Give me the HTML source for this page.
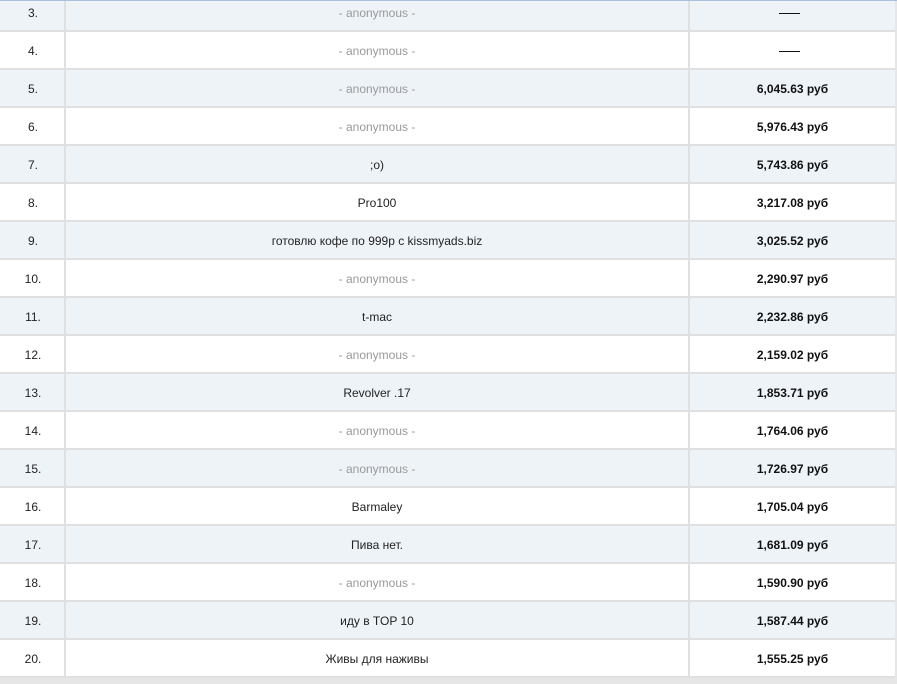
<!DOCTYPE html>
<html><head><meta charset="utf-8"><style>
body{margin:0;width:897px;height:684px;background:#e6e6e6;position:relative;overflow:hidden;font-family:"Liberation Sans",Arial,sans-serif;font-size:12px;color:#222}
.r{position:absolute;left:0;width:895px;height:36px;border-bottom:2px solid #e0e0e0}
.r.a{background:#eef3f8}.r.b{background:#fff}
.c{position:absolute;top:0;height:36px;line-height:38px;text-align:center}
.c1{left:0;width:64px;border-right:2px solid #e0e0e0;padding-left:2px;box-sizing:border-box;width:66px}
.c2{left:66px;width:622px;border-right:2px solid #e0e0e0}
.c3{left:690px;width:205px;font-weight:bold;color:#111}
.an{color:#999}
.d{display:inline-block;width:21px;height:1px;background:#111;vertical-align:middle;margin-left:-6px}
.top{position:absolute;left:0;top:0;width:897px;height:1px;background:#a9c0da}
</style></head><body>
<div class="r a" style="top:-6px"><div class="c c1">3.</div><div class="c c2 an">- anonymous -</div><div class="c c3"><span class="d"></span></div></div>
<div class="r b" style="top:32px"><div class="c c1">4.</div><div class="c c2 an">- anonymous -</div><div class="c c3"><span class="d"></span></div></div>
<div class="r a" style="top:70px"><div class="c c1">5.</div><div class="c c2 an">- anonymous -</div><div class="c c3">6,045.63 руб</div></div>
<div class="r b" style="top:108px"><div class="c c1">6.</div><div class="c c2 an">- anonymous -</div><div class="c c3">5,976.43 руб</div></div>
<div class="r a" style="top:146px"><div class="c c1">7.</div><div class="c c2">;o)</div><div class="c c3">5,743.86 руб</div></div>
<div class="r b" style="top:184px"><div class="c c1">8.</div><div class="c c2">Pro100</div><div class="c c3">3,217.08 руб</div></div>
<div class="r a" style="top:222px"><div class="c c1">9.</div><div class="c c2">готовлю кофе по 999р с kissmyads.biz</div><div class="c c3">3,025.52 руб</div></div>
<div class="r b" style="top:260px"><div class="c c1">10.</div><div class="c c2 an">- anonymous -</div><div class="c c3">2,290.97 руб</div></div>
<div class="r a" style="top:298px"><div class="c c1">11.</div><div class="c c2">t-mac</div><div class="c c3">2,232.86 руб</div></div>
<div class="r b" style="top:336px"><div class="c c1">12.</div><div class="c c2 an">- anonymous -</div><div class="c c3">2,159.02 руб</div></div>
<div class="r a" style="top:374px"><div class="c c1">13.</div><div class="c c2">Revolver .17</div><div class="c c3">1,853.71 руб</div></div>
<div class="r b" style="top:412px"><div class="c c1">14.</div><div class="c c2 an">- anonymous -</div><div class="c c3">1,764.06 руб</div></div>
<div class="r a" style="top:450px"><div class="c c1">15.</div><div class="c c2 an">- anonymous -</div><div class="c c3">1,726.97 руб</div></div>
<div class="r b" style="top:488px"><div class="c c1">16.</div><div class="c c2">Barmaley</div><div class="c c3">1,705.04 руб</div></div>
<div class="r a" style="top:526px"><div class="c c1">17.</div><div class="c c2">Пива нет.</div><div class="c c3">1,681.09 руб</div></div>
<div class="r b" style="top:564px"><div class="c c1">18.</div><div class="c c2 an">- anonymous -</div><div class="c c3">1,590.90 руб</div></div>
<div class="r a" style="top:602px"><div class="c c1">19.</div><div class="c c2">иду в TOP 10</div><div class="c c3">1,587.44 руб</div></div>
<div class="r b" style="top:640px"><div class="c c1">20.</div><div class="c c2">Живы для наживы</div><div class="c c3">1,555.25 руб</div></div>
<div class="top"></div>
</body></html>
